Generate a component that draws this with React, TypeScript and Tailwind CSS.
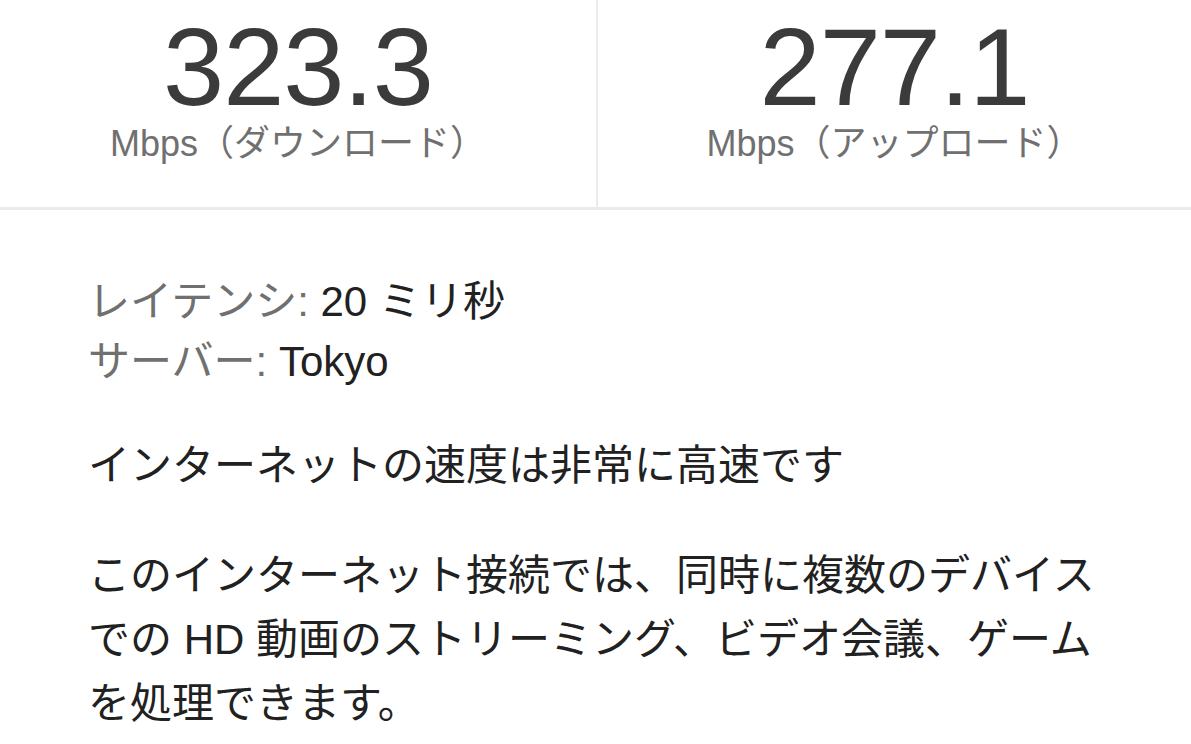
import React from "react";

const font = {
  fontFamily: '"Liberation Sans", Arial, "Noto Sans CJK JP", sans-serif',
};

interface SpeedStatProps {
  value: string;
  label: string;
}

function SpeedStat({ value, label }: SpeedStatProps) {
  return (
    <div className="flex flex-col items-center pt-[12px]">
      <div className="text-[110px] leading-[110px] tracking-[-0.01em] text-[#3b3b3b]">{value}</div>
      <div className="text-[36px] leading-[44px] text-[#707070]">{label}</div>
    </div>
  );
}

export default function App() {
  return (
    <div className="min-h-screen w-full bg-white" style={font}>
      <div className="grid h-[210px] grid-cols-[596px_2px_1fr] border-b-[3px] border-[#ebebeb]">
        <SpeedStat value="323.3" label="Mbps（ダウンロード）" />
        <div className="bg-[#ebebeb]" />
        <SpeedStat value="277.1" label="Mbps（アップロード）" />
      </div>

      <div className="px-[88px] pt-[62px] text-[42px]">
        <div className="leading-[60px]">
          <div>
            <span className="text-[#707070]">レイテンシ: </span>
            <span className="text-[#212121]">20 ミリ秒</span>
          </div>
          <div>
            <span className="text-[#707070]">サーバー: </span>
            <span className="text-[#212121]">Tokyo</span>
          </div>
        </div>

        <p className="mt-[42px] leading-[64px] text-[#212121]">
          インターネットの速度は非常に高速です
        </p>

        <p className="mt-[46px] leading-[64px] text-[#212121]">
          このインターネット接続では、同時に複数のデバイスでの HD 動画のストリーミング、ビデオ会議、ゲームを処理できます。
        </p>
      </div>
    </div>
  );
}
